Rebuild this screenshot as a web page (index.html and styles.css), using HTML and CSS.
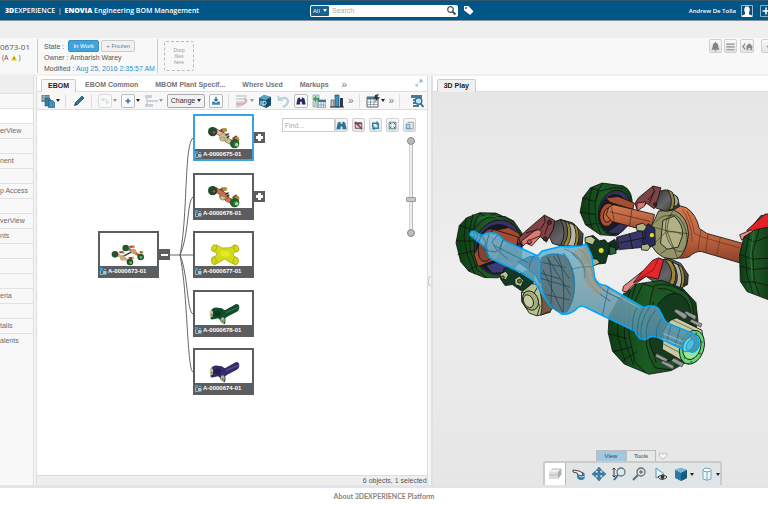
FILE: index.html
```html
<!DOCTYPE html>
<html lang="en">
<head>
<meta charset="utf-8">
<title>ENOVIA Engineering BOM Management</title>
<link rel="stylesheet" href="styles.css">
</head>
<body>
<svg class="defs" aria-hidden="true">
  <symbol id="binoc" viewBox="0 0 14 14"><path d="M3 4 5 3h1v2h2V3h1l2 1 1.500 7H8V8H6v3H1.500z"/></symbol>
  <symbol id="part" viewBox="0 0 7 7"><path d="M0 0h3v3H0z" fill="#3f9cc9"/><path d="M.5 3v3.500H3M4 1.500h2" fill="none" stroke="#a9cfe0" stroke-width=".8"/><path d="M3 3h3.500v3.500H3z" fill="#9ecbe2"/></symbol>
  <symbol id="assembly" viewBox="0 0 171 97">
    <path d="M44 62 68 70 92 86M76 44 100 54 122 68M68 70 98 54" fill="none" stroke="#33334f" stroke-width="4"/>
    <path d="m50 62 40 24" stroke="#d2b68e" stroke-width="8"/><path d="m80 43 42 26" stroke="#cf6245" stroke-width="8"/>
    <circle cx="68" cy="74" r="8" fill="#c7ac7d"/><circle cx="101" cy="54" r="8" fill="#c9a36d"/>
    <g fill="#1d5a27"><circle cx="77" cy="44" r="10"/><circle cx="122" cy="71" r="10"/><circle cx="45" cy="63" r="10"/><circle cx="90" cy="86" r="10"/></g>
    <path d="M88 40h14M58 57h13M119 57h8M86 74h12" stroke="#a83d32" stroke-width="6"/><path d="M98 40h6M68 58h5M125 57h5M96 74h5" stroke="#b6a52b" stroke-width="7"/>
    <circle cx="123" cy="72" r="4" fill="#6cb17a"/><circle cx="92" cy="88" r="4" fill="#6cb17a"/><circle cx="79" cy="45" r="4" fill="#6a3045"/><circle cx="47" cy="64" r="4" fill="#6a3045"/>
  </symbol>
  <symbol id="axle" viewBox="0 0 171 97">
    <path d="m61 43 24 13 12 16 22 11" fill="none" stroke="#604436" stroke-width="15"/>
    <path d="m61 43 24 13 12 16 22 11" fill="none" stroke="currentColor" stroke-width="12"/>
    <ellipse cx="87" cy="63" rx="14" ry="11" fill="currentColor" stroke="#675137"/>
    <ellipse cx="83" cy="68" rx="8" ry="6" fill="#c9c18f" stroke="#4f4b2d"/>
    <path d="m72 43 10-7 9 4-6 9zM111 66l12-9 7 7-12 8z" fill="#8e3935"/>
    <ellipse cx="89" cy="41" rx="8" ry="6" fill="#a7942f"/><ellipse cx="126" cy="69" rx="7" ry="8" fill="#a7942f"/>
    <circle cx="53" cy="46" r="14" fill="#1b4f22"/><circle cx="57" cy="48" r="7" fill="#392b62"/><circle cx="57" cy="48" r="4" fill="#bd4a30"/>
    <circle cx="119" cy="82" r="14" fill="#205e2a"/><circle cx="123" cy="84" r="8" fill="#397f43"/><circle cx="125" cy="85" r="5" fill="#a2dda0"/>
    <path d="m91 57 10-5m-6 13 8-7" stroke="#1d3b1f" stroke-width="4"/>
  </symbol>
  <symbol id="yoke" viewBox="0 0 171 97">
    <path d="m87 55 36-20q10 0 10 10t-9 14L91 76z" fill="currentColor"/>
    <path d="M46 57q8-15 23-11 13 0 19 7 12 6 13 14l-10 11q2 11-2 18l-11-6q-3-10-9-12-12 4-22 3z" fill="currentColor"/>
    <path d="m93 61 38-17" stroke="#fff" stroke-opacity=".18" stroke-width="4"/>
    <path d="M58 59q13-10 21 2l-6 13-17-5z" fill="#000" fill-opacity=".28"/>
    <ellipse cx="49" cy="64" rx="5" ry="10" fill="#c5c8a2"/><ellipse cx="83" cy="84" rx="6" ry="9" fill="#aeb78c"/><circle cx="50" cy="67" r="3" fill="#6d785a"/><circle cx="83" cy="87" r="3" fill="#637152"/>
  </symbol>
</svg>

<header class="topbar">
  <h1 class="brand"><b>3D</b>EXPERIENCE <span class="bar">|</span> <b>ENOVIA</b> Engineering BOM Management</h1>
  <form class="search">
    <button type="button" class="scope">All <i class="caret"></i></button>
    <input type="text" aria-label="Search" placeholder="Search">
    <button type="button" class="plain" aria-label="Go"><svg width="11" height="11" viewBox="0 0 11 11" fill="none" stroke="#4b4b4b"><circle cx="4.500" cy="4.500" r="2.800" stroke-width="1.200"/><path d="m6.500 6.500 3 3" stroke-width="1.800"/></svg></button>
  </form>
  <div class="account">
    <svg class="tag" width="11" height="11" viewBox="0 0 11 11"><path d="M1 1h4.500l5 5.500L7 10 1 5.200z" fill="#fff"/><circle cx="3" cy="3" r=".9" fill="#005686"/></svg>
    <a href="#">Andrew De Tolla</a>
    <svg width="12" height="12" viewBox="0 0 12 12"><path d="M.5.500h11v11H.5z" fill="#17496c" stroke="#9cb9cd"/><path d="M1 12v-1.500l3-1.300V7.500Q3 6 3.300 3.500 4 1.200 6 1.200t2.700 2.300Q9 6 8 7.500v1.700l3 1.300V12z" fill="#fff"/></svg>
    <button type="button" class="plain add" aria-label="Add"><svg width="12" height="12" viewBox="0 0 12 12" fill="none"><path d="M.5.500h11v11H.5z" stroke="#8fb2c9"/><path d="M6 2.500v7M2.500 6h7" stroke="#fff" stroke-width="1.500"/></svg></button>
  </div>
</header>
<div class="strip"></div>

<section class="object">
  <div class="ident"><h2>0673-01</h2><p>(A <svg width="6" height="6" viewBox="0 0 6 6"><path d="M3 .3 5.800 5.500H.2z" fill="#efbd0c"/><path d="M3 2v2" stroke="#765e0a" stroke-width=".7"/></svg> )</p></div>
  <div class="facts">
    <div class="state">State : <button type="button" class="on">In Work</button><button type="button">+ Frozen</button></div>
    <div>Owner : Ambarish Warey</div>
    <div>Modified : <a href="#">Aug 25, 2016 2:35:57 AM</a></div>
  </div>
  <div class="drop">Drop<br>files<br>here</div>
  <div class="actions">
    <button type="button" class="box" aria-label="Notifications"><svg viewBox="0 0 14 14" fill="#85857f"><path d="M2.500 10.500Q4 9 4 6.500 4 3.300 7 3q3 .3 3 3.500 0 2.500 1.500 4zM6 11h2v1H6zM6.500 2h1v1.500h-1z"/></svg></button>
    <button type="button" class="box" aria-label="List"><svg viewBox="0 0 14 14" fill="none" stroke="#8b8b8b"><path d="M2.500 4.500h9M2.500 7.500h9M2.500 10.500h9" stroke-width="1.300"/></svg></button>
    <button type="button" class="box home" aria-label="Home"><svg viewBox="0 0 14 14"><path d="M4.500 4 2 7l2.500 3" fill="none" stroke="#898989" stroke-width="1.300"/><path d="M5 7.200 9 3.500l4 3.700h-1V11h-2V8.500H8V11H6V7.200z" fill="#898989"/></svg></button>
    <button type="button" class="box back" aria-label="Back"><svg viewBox="0 0 14 14"><path d="M8 4 5 7l3 3z" fill="#8a8a8a"/></svg></button>
  </div>
</section>

<main class="work">
  <nav class="side">
    <ul>
      <li class="head"></li><li></li><li class="current"></li>
      <li><a href="#">erView</a></li><li></li>
      <li><a href="#">nent</a></li><li></li>
      <li><a href="#">p Access</a></li><li></li>
      <li><a href="#">verView</a></li><li><a href="#">nts</a></li><li></li><li></li><li></li>
      <li><a href="#">eria</a></li><li></li><li><a href="#">tails</a></li><li><a href="#">alents</a></li>
    </ul>
  </nav>

  <section class="bom">
    <nav class="tabs">
      <a href="#" class="active">EBOM</a><a href="#">EBOM Common</a><a href="#">MBOM Plant Specif...</a><a href="#">Where Used</a><a href="#">Markups</a><a href="#" class="more">»</a>
      <button type="button" class="plain expand" aria-label="Expand"><svg width="8" height="8" viewBox="0 0 8 8" fill="#8fb5cb"><path d="M4 .5h3.500V4L6.300 2.800 5 4 4 3l1.300-1.300z"/><path d="M3.300 7.500H.5V4.700l.9.900L2.500 4.500l1 1-1.100 1.100z" fill="#b5bfc5"/></svg></button>
    </nav>
    <div class="toolbar">
      <div class="group">
        <button type="button" class="tool menu" aria-label="Views"><svg viewBox="0 0 14 14"><path d="M.5 1h8v7h-8z" fill="#667985"/><path d="M1 3h7M1 5h7M3 1v7" stroke="#bdd3df" stroke-width=".7"/><path d="M4 4h4l1.500 1.500V12H4z" fill="#347fa8" stroke="#1e536f" stroke-width=".6"/><path d="M7.500 6.500h4L13.500 8v5.700h-6z" fill="#3c91bb" stroke="#1c516c" stroke-width=".6"/></svg><i class="caret"></i></button>
      </div>
      <div class="group">
        <button type="button" class="tool" aria-label="Edit"><svg viewBox="0 0 14 14"><path d="m3 9 7-7 2 2-7 7z" fill="#28769c" stroke="#294350" stroke-width=".7"/><path d="m3 9 2 2-3 1z" fill="#303030"/></svg></button>
      </div>
      <div class="group">
        <button type="button" class="tool menu off" aria-label="Insert" disabled><svg class="frame" viewBox="0 0 14 14"><path d="M3 4h3v3H3zM8 7h3v3H8z" fill="#9fc1d8"/><path d="M6 5h3v2" fill="none" stroke="#aaa"/></svg><i class="caret"></i></button>
        <button type="button" class="tool menu" aria-label="Add"><svg class="frame" viewBox="0 0 14 14"><path d="M7 4v6M4 7h6" stroke="#3970b5" stroke-width="1.800"/></svg><i class="caret"></i></button>
        <button type="button" class="tool menu off" aria-label="Structure" disabled><svg viewBox="0 0 14 14"><path d="M1 1h7v3H1zM1 10h8v3H1z" fill="#9da5aa"/><path d="M5 6h9v2H5z" fill="#7fb0cb"/><path d="M3 4v7M3 7h3" stroke="#777"/></svg><i class="caret"></i></button>
        <button type="button" class="change">Change <i class="caret"></i></button>
        <button type="button" class="tool" aria-label="Download"><svg class="frame" viewBox="0 0 14 14"><path d="M7 2v5M5 5l2 2 2-2" stroke="#30779f" stroke-width="1.500" fill="none"/><path d="M2.500 7.500H5L6 9h2l1-1.500h2.500v4h-9z" fill="#3b84aa"/></svg></button>
      </div>
      <div class="group">
        <button type="button" class="tool menu off" aria-label="Markup" disabled><svg viewBox="0 0 14 14"><path d="M1 2h11M1 5h11M1 8h8" stroke="#8c9eab" stroke-width="1.500"/><path d="m1 13 6-2 5-5" stroke="#6fa6c7" stroke-width="2" fill="none"/><path d="M1 10h7q4-1 3-4L9 4" stroke="#dc504b" stroke-width="1.800" fill="none"/></svg><i class="caret"></i></button>
        <button type="button" class="tool" aria-label="3D"><svg viewBox="0 0 14 14"><path d="m1 4 5-3 7 2v8l-5 3-7-3z" fill="#226b91"/><path d="m1 4 5-3 7 2-5 3z" fill="#5aa5c5"/><path d="m8 6 5-3v8l-5 3z" fill="#184a68"/><path d="M3 7v4M5 7v5M5 7.500q4-.5 3 2t-3 1" stroke="#d5edf5" stroke-width="1" fill="none"/></svg></button>
        <button type="button" class="tool off" aria-label="Undo" disabled><svg viewBox="0 0 14 14"><path d="M4 5q7-3 8 2 0 4-5 6" stroke="#75a7c3" stroke-width="2.300" fill="none"/><path d="M1.500 1v6h6z" fill="#75a7c3"/></svg></button>
        <button type="button" class="tool" aria-label="Find"><svg class="frame navy"><use href="#binoc"/></svg></button>
        <button type="button" class="tool" aria-label="Export"><svg viewBox="0 0 14 14"><path d="M1 1h6v12H1z" fill="#d8dfdf" stroke="#7a8a90" stroke-width=".6"/><path d="m1 5 3-3v2h3v2H4v2zM2 9h3M2 11h3" fill="#3ca45b" stroke="#3ca45b" stroke-width=".5"/><path d="M6 6h8v8H6z" fill="#e5edf1" stroke="#50636e" stroke-width=".7"/><path d="M6 6h8v2H6z" fill="#397898"/><path d="M9 8v6M11.500 8v6M6 11h8" stroke="#708b98" stroke-width=".6"/></svg></button>
        <button type="button" class="tool" aria-label="Chart"><svg viewBox="0 0 14 14"><path d="M1 6h3v7H1z" fill="#bdc1c3" stroke="#4c5358" stroke-width=".7"/><path d="M5 1h4v12H5z" fill="#3f90b5" stroke="#234a60" stroke-width=".7"/><path d="M10 4h3v9h-3z" fill="#333c44"/><path d="M0 13h14" stroke="#333"/></svg></button>
        <button type="button" class="plain more">»</button>
      </div>
      <div class="group">
        <button type="button" class="tool menu" aria-label="Table"><svg viewBox="0 0 14 14"><path d="M1 3h11v10H1z" fill="#fff" stroke="#58656d"/><path d="M1 3h11v2.500H1z" fill="#347ca1"/><path d="M4.500 5v8M8 5v8M1 8h11M1 10.500h11" stroke="#78858c" stroke-width=".7"/><path d="m9 1 4-1-2 3h3L9 8l1-3H8z" fill="#30373b"/></svg><i class="caret"></i></button>
        <button type="button" class="plain more">»</button>
      </div>
      <div class="group last">
        <button type="button" class="tool" aria-label="Filter"><svg viewBox="0 0 14 14"><path d="M1 1h11v3H1zM3 5h4v2H3zM3 8h4v2H3zM3 11h6v2H3z" fill="#4c7c94"/><circle cx="8.500" cy="7" r="3.300" fill="#c5e2ef" stroke="#2b7399" stroke-width="1.400"/><path d="m10.500 9.500 3 3.500" stroke="#22668a" stroke-width="1.800"/></svg></button>
      </div>
    </div>

    <div class="canvas">
      <svg class="edges" width="230" height="290" fill="none" stroke="#666"><path d="M131 145h26M144 145C152 105 148 35 157 28M144 145C153 125 151 91 157 87M144 145C152 164 151 202 157 204M144 145C152 185 151 260 157 262"/></svg>
      <article class="node root"><svg class="thumb"><use href="#assembly"/></svg><h3><svg width="7" height="7"><use href="#part"/></svg>A-0000673-01</h3><button type="button" aria-label="Collapse" class="minus"></button></article>
      <article class="node n1 selected"><svg class="thumb beige"><use href="#axle"/></svg><h3><svg width="7" height="7"><use href="#part"/></svg>A-0000675-01</h3><button type="button" aria-label="Expand" class="plus"></button></article>
      <article class="node n2"><svg class="thumb rust"><use href="#axle"/></svg><h3><svg width="7" height="7"><use href="#part"/></svg>A-0000676-01</h3><button type="button" aria-label="Expand" class="plus"></button></article>
      <article class="node n3"><svg class="thumb" viewBox="0 0 171 97"><g fill="#d4da16" stroke="#9ca209" stroke-width="2"><path d="m64 34 17 10 24-1 14-9q13 6 9 19l-13 7 1 8 13 7q4 12-8 19l-19-8-13-9-13 8-15 8q-15-7-10-20l14-7V59l-14-7q-2-12 13-18z"/><ellipse cx="57" cy="44" rx="7" ry="10" transform="rotate(24 57 44)"/><ellipse cx="124" cy="45" rx="7" ry="10" transform="rotate(-24 124 45)"/><ellipse cx="57" cy="83" rx="7" ry="11"/><ellipse cx="122" cy="83" rx="8" ry="11"/></g><path d="m77 53 24 0 4 12-11 7-17-5z" fill="#e3e827"/></svg><h3><svg width="7" height="7"><use href="#part"/></svg>A-0000677-01</h3></article>
      <article class="node n4"><svg class="thumb green"><use href="#yoke"/></svg><h3><svg width="7" height="7"><use href="#part"/></svg>A-0000678-01</h3></article>
      <article class="node n5"><svg class="thumb violet"><use href="#yoke"/></svg><h3><svg width="7" height="7"><use href="#part"/></svg>A-0000674-01</h3></article>

      <div class="finder">
        <input type="text" aria-label="Find" placeholder="Find...">
        <button type="button" class="box" aria-label="Find"><svg class="teal"><use href="#binoc"/></svg></button>
        <button type="button" class="box" aria-label="Clear"><svg viewBox="0 0 14 14"><path d="M3.500 4h7v6h-7z" fill="#cbd4d8" stroke="#50595d"/><path d="m3 3 8 8M3 5h7" stroke="#ae2b35" stroke-width="1.500"/></svg></button>
        <button type="button" class="box" aria-label="Reorient"><svg viewBox="0 0 14 14"><path d="M4 9V4.500h5M10 5v5H5" fill="none" stroke="#397da3" stroke-width="1.700"/><path d="m8 2 3 2.500L8 7zM6 7.500v5L3 10z" fill="#397da3"/></svg></button>
        <button type="button" class="box" aria-label="Fit"><svg viewBox="0 0 14 14"><path d="M3.500 3.500h7v7h-7z" fill="#d9e7ee" stroke="#527b90"/><path d="m4 4 6 6m0-6-6 6" stroke="#2e6f92"/><circle cx="7" cy="7" r="1.500" fill="#fff"/></svg></button>
        <button type="button" class="box" aria-label="Overview"><svg viewBox="0 0 14 14"><path d="M5 3.500h6v7H4V7" fill="#eef2f4" stroke="#8b989e"/><path d="M3.500 5.500h4v5h-4z" fill="#b8d6e5" stroke="#5c93b0"/></svg></button>
      </div>
      <div class="zoomer"><i></i><input type="range" aria-label="Zoom" min="0" max="100" value="34"><i></i></div>
    </div>
    <div class="status">6 objects, 1 selected</div>
  </section>

  <div class="splitter"><i></i></div>

  <section class="viewer">
    <nav class="tabs"><a href="#" class="active">3D Play</a></nav>
    <div class="stage">
      <svg class="model" viewBox="433 92 335 393" preserveAspectRatio="xMinYMin slice">
        <defs>
          <linearGradient id="gGreen" x1="0" x2="1"><stop stop-color="#0c3c13"/><stop offset=".45" stop-color="#1d5b25"/><stop offset="1" stop-color="#123d18"/></linearGradient>
          <linearGradient id="gRust" x1="0" x2="0" y2="1"><stop stop-color="#d47a50"/><stop offset=".6" stop-color="#b9603d"/><stop offset="1" stop-color="#87402a"/></linearGradient>
          <linearGradient id="gDark" x1="0" x2="1" y2="1"><stop stop-color="#333"/><stop offset=".5" stop-color="#666"/><stop offset="1" stop-color="#252525"/></linearGradient>
          <linearGradient id="gBlue" x1="0" x2="0" y2="1"><stop stop-color="#72bad9"/><stop offset=".5" stop-color="#739fac"/><stop offset="1" stop-color="#4388a4"/></linearGradient>
        </defs>
        <g transform="translate(440 170) scale(.33333)" stroke="#101510" stroke-width="2.500" stroke-linejoin="round">
          <!-- rear left wheel -->
          <path d="M486 39 548 47Q580 60 576 115 570 173 528 197L480 194 436 164 420 126 428 83 451 53Z" fill="url(#gGreen)"/>
          <path d="m456 53-9 36-1 52 12 38M487 40l-15 24-8 38 3 50 14 39M428 83l38 12 10-31M420 126l45 7M436 164l37-4M452 54l28 9 40-10 30 1" fill="none"/>
          <ellipse cx="524" cy="127" rx="49" ry="67" fill="#333052" transform="rotate(11 524 127)"/>
          <ellipse cx="520" cy="130" rx="42" ry="57" fill="#171a2c" transform="rotate(11 520 130)"/>
          <ellipse cx="502" cy="134" rx="23" ry="35" fill="#ab4d31" transform="rotate(10 502 134)"/>
          <ellipse cx="503" cy="135" rx="13" ry="21" fill="#c2633c" transform="rotate(10 503 135)"/>
          <path d="m496 84 38-5 48 20-4 19-67-21z" fill="#a74c31"/>
          <path d="m533 164 27-17 8 15-32 30-36-5z" fill="#34315f"/>
          <!-- rear axle -->
          <path d="m506 111 15-7 55 13 67 16-12 52-116-31-17-20z" fill="url(#gRust)"/>
          <path d="m509 125 121 29M514 111l8 40M575 118l-7 50" fill="none" stroke-width="1.500"/>
          <path d="M661 120q41-23 78-7 30 21 38 62l23 15 116 32-11 58-122-36q-18-2-36 16-28 10-57-4z" fill="url(#gRust)"/>
          <path d="M739 122q20 35 22 67l28 13 121 35M726 118q28 37 30 96M782 178l-9 62M803 192l-7 53M840 202l-10 50" fill="none" stroke="#65311f" stroke-width="2"/>
          <path d="m655 123 45-4q43 20 45 72-6 57-32 74-51 10-78-37l-7-46z" fill="#929468"/>
          <path d="m668 151 34-13q28 26 25 57l-13 36-33 6-20-17z" fill="#b1b184"/>
          <path d="M700 119q-17 23-20 63M745 191l-65-9-43-12M713 265l-33-83M680 182l-45 46M681 185q32-2 46 10M645 157q20-28 57-19M681 237l-20 14" fill="none" stroke="#454b33"/>
          <ellipse cx="708" cy="189" rx="30" ry="57" fill="none" transform="rotate(-15 708 189)" stroke-width="1.500"/>
          <!-- rear suspension -->
          <path d="m652 64 25-5 35 22 6 28q-25 16-45 14l-27-10z" fill="url(#gDark)"/>
          <path d="m682 59 14 7q15 24 3 50l-13 4q17-28-4-61z" fill="#97833d"/><path d="m699 73 10 5q10 15 3 27l-11 5q7-16-2-37z" fill="#a7a7a0"/>
          <path d="m584 100 11-17 43-35 24 5-8 31-12 32-22-16-30 17z" fill="#814247"/>
          <path d="m590 99 27-4-4 13-22 14z" fill="#dc7773"/><path d="m638 49 4 15-15 36M645 63l-22 27" fill="none"/><circle cx="645" cy="103" r="5" fill="#38282c"/>
          <!-- propeller shaft -->
          <path d="m437 219 60 4 27-16 10 30-25 14-67 31-24-7z" fill="#0e2f1e"/>
          <path d="m530 201 81-22 20 6 9 37-14 8-87 8-11-10z" fill="#383567"/><path d="m531 201 6 40M568 190l9 46M605 180l9 51M538 218l85-17" fill="none"/>
          <path d="m609 172 17-11 18 15 1 48-18 8-24-18 13-14z" fill="#28285b"/>
          <path d="m588 165 20-6 11 11-8 13-21-2z" fill="#b1b382"/><path d="m603 225 20-4 7 10-8 10-18-2z" fill="#adb287"/><circle cx="635" cy="195" r="8" fill="#dedc36"/>
          <path d="m436 203 23-7 19 16 16-3 16 18-14 52-26 3-24-5-6-40z" fill="#123724"/>
          <circle cx="483" cy="241" r="9" fill="#dede24"/><path d="m435 202 18-4 13 10-8 16-23-8z" fill="#b7c28c"/><path d="m451 265 20 2 8 11-18 9-15-11z" fill="#a6b17f"/><path d="m507 229 18 3 3 17-19 5z" fill="#23643c"/>
          <!-- rear right wheel -->
          <path d="m934 170 28-34h22l10 12v56l-43 3z" fill="url(#gDark)"/><path d="m920 180 54-48 14-1v44l-65 28z" fill="#e62027"/><path d="m898 194 35-15 9 13-38 18z" fill="#ed8e8b"/>
          <path d="m988 170-43 9-34 21-13 53 2 80 20 31 68 26z" fill="url(#gGreen)"/>
          <path d="m927 188-12 65 5 60 18 57M957 176l-20 70 5 87 16 43M898 253l39 14 50-3M898 288l40 10 50-5M903 335l41 1 44 11M911 200l33 15 43-17" fill="none"/><path d="m940 183-9 66 5 78" stroke="#45754a" fill="none"/>
          <!-- front left wheel -->
          <path d="m119 128 48 1 54 24 27 39-4 77-29 37-42 17-40-1-47-19-24-28-14-57 10-52 22-23z" fill="url(#gGreen)"/>
          <path d="M78 143 72 199l10 55 22 58M99 132 88 181l3 61 19 55 30 26M123 128q-24 23-23 67l5 48 21 54M58 166l40 13 30-28 38-22M49 212l51 1M53 254l51-13M84 302l39-24M118 130l22 11 55-2 27 15" fill="none"/>
          <path d="M110 151q23-17 56-12l36 18" stroke="#377f40" fill="none"/>
          <ellipse cx="174" cy="231" rx="70" ry="82" fill="#353164" transform="rotate(15 174 231)"/>
          <ellipse cx="171" cy="235" rx="61" ry="72" fill="#161724" transform="rotate(15 171 235)"/>
          <path d="m124 211 31-28 51-11 33 19 3 27-51 7-24 44-53 20-12-35z" fill="#a54a30"/>
          <ellipse cx="143" cy="225" rx="27" ry="50" fill="#824331" transform="rotate(14 143 225)"/><path d="m137 286 56-17 38 10-29 28-45 2z" fill="#3d3b73"/><path d="m161 178 74 23-5 28-87-33z" fill="#a34b2f"/>
          <!-- left trailing arm and air spring -->
          <path d="m342 155 19-7 37 10 31 33-3 36-41 7-48-14-14-30z" fill="url(#gDark)"/>
          <path d="m361 148 17 8q13 29-3 72l-13-3q20-40-1-77z" fill="#5d5d5d"/><path d="m380 157 25 8q13 27-3 64l-25-4q20-34 3-68z" fill="#b8b7a9"/><path d="m376 154 9 3q17 37-4 71l-11-3q22-33 6-71zM400 163l10 6q13 29 0 58l-9 3q14-36-1-67z" fill="#9b8630"/>
          <path d="m236 204 18-19 59-50 31 16-5 27-20 38-19-17-6-18-36 23-14 23z" fill="#824247"/>
          <path d="m244 213 47-37 13 8-3 15-26 28-17-8-10 9z" fill="#df7773"/><path d="m312 136 3 19-14 23M329 148l-15 45M257 188l37-9M271 209l30-12" fill="none"/><circle cx="268" cy="215" r="6" fill="#c95c5b"/><circle cx="328" cy="157" r="6" fill="#4d2b31"/><circle cx="315" cy="206" r="6" fill="#4d2b31"/>
          <!-- input yoke and carrier -->
          <path d="m191 296 18-5 29 19 30-12 16 17-9 43-31 4-27-19-22 3-13-19z" fill="#123925"/><path d="m180 312 17-9 8 11-7 15-16-3zM224 327l14-9 12 13-7 18-18-6z" fill="#b6c293"/><circle cx="238" cy="333" r="6" fill="#577247"/><circle cx="188" cy="322" r="5" fill="#677c50"/>
          <path d="m244 366 32-26 22 6 20 35 13 45-40 11-23-8-23-34z" fill="#b9c292"/><path d="m294 345 25 5 26 56-16 18-27 11q10-41-8-90z" fill="#79573e"/><path d="m244 366 34 10 22 32-9 28M252 404l26-28 17-30M259 380l-12 17M260 416l28-6" fill="none"/><ellipse cx="271" cy="391" rx="23" ry="30" fill="#a4ae7c" transform="rotate(-25 271 391)"/><ellipse cx="265" cy="393" rx="14" ry="20" fill="#c6cba0" transform="rotate(-25 265 393)"/>
          <!-- front right suspension -->
          <path d="m619 319 26-45 41-10 36 16 22 34-2 29-27 15-59-12z" fill="url(#gDark)"/>
          <path d="m673 266 20 7q25 34 5 76l-14-5q26-37-11-78z" fill="#9c8735"/><path d="m696 275 20 10q18 34 3 68l-17-2q22-32-6-76z" fill="#b0b0a7"/><path d="m713 283 12 7q15 30 3 61l-9 5q13-35-6-73z" fill="#9c8735"/>
          <path d="m550 348 56-44 4 20-37 26-14 16-12-4z" fill="#e48682"/><path d="m603 308 35-38 18-7 14 6-16 58-35-8-39 19z" fill="#e5262b"/><path d="m656 264-18 36-41 25" fill="none" stroke="#841519"/>
          <!-- front right wheel -->
          <path d="m587 342 77-12 65 26 38 41 6 55-33 123-47 26-67 11-74-31-35-38-13-56 3-50 31-55 32-25z" fill="url(#gGreen)"/>
          <path d="m552 366-20 64 1 70 22 74M571 359l-19 57 1 90 26 77M588 342q-28 71-22 148l18 86 34 33M507 437l55 22M504 490l57 15M520 544l53-13M546 573l44-29M531 383l47 25 29-66M604 339l62 21 65-1" fill="none"/>
          <path d="M643 345q59-10 101 32 28 42 5 112l-24 77-34 32-46-5q-42-63-21-151 4-62 19-97z" fill="#1c5624"/><path d="M653 355q55-3 82 46 20 43-15 130l-27 46M640 394q-31 74 8 184" fill="none"/>
          <ellipse cx="690" cy="471" rx="61" ry="103" fill="#143b1e" transform="rotate(12 690 471)"/>
          <g fill="#99999b" stroke="#333" stroke-width="2"><path d="m702 424 5-8 34 17-3 11-7 2zM732 430l5-8 31 15-3 12zM748 454l6-7 31 14-4 10zM645 559l4-9 33 17-4 10zM662 578l6-8 34 17-5 10zM693 572l7-9 30 16-5 11z"/></g>
          <path d="m671 482 18-31 20-8 76 37 6 46-21 46-26 10-78-45z" fill="#c9cba1"/><path d="m683 458 78 37M674 475l77 42M669 498l76 35M668 520l72 39M697 449l75 36" stroke="#6c7457" stroke-width="3"/>
          <ellipse cx="755" cy="531" rx="36" ry="52" fill="#68d278" transform="rotate(18 755 531)"/><ellipse cx="755" cy="530" rx="26" ry="39" fill="#99e497" transform="rotate(18 755 530)"/><g fill="#287939" stroke="none"><circle cx="768" cy="490" r="3"/><circle cx="785" cy="516" r="3"/><circle cx="779" cy="550" r="3"/><circle cx="753" cy="575" r="3"/><circle cx="733" cy="562" r="3"/></g>
          <!-- selected front axle -->
          <g stroke="#008dda" fill="url(#gBlue)">
            <path d="M90 195q-1-11 12-12l23 13q22-14 49-3l17 18 101 46 14-14 55-14 61-1 16-6q10 16 17 37l8 62q8 23 33 25l114 66 19-5q24-1 31 17l11 22q6 13 21 17l65 26q20 13 20 34-4 20-21 23l-37-13-50-24q-22-13-36-10l-18 9q-24 0-30-26l-95-45-52-25q-20-10-31 6-20 17-43 13l-34-24-30-44-15-28-44-29-85-39q-15-8-17-33z" fill-opacity=".87" stroke="#00a7fa" stroke-width="5"/>
            <path d="m234 275 36-16 24 2 10 20-4 60-14-27z" fill="#548aa6" fill-opacity=".85"/>
            <path d="M303 263q32-20 69-7 32 31 32 88-2 51-23 81-27 7-49-18-30-40-29-91z" fill="#536a70" fill-opacity=".78"/>
            <path d="m320 259 71 115M308 298l59 128M325 267q14 40 7 134M352 252q25 52 17 174M303 325l88 26M316 373l73 16M340 258l48 68M307 277l70 15M302 309l57 17" fill="none" stroke="#193b4d" stroke-width="2"/>
            <path d="M369 250q28 26 32 82 6 45-15 80M394 247q47 41 48 77 9 33 69 69M415 237q32 10 46 92 24 38 86 58" fill="none" stroke="#3c7589" stroke-width="3"/>
            <path d="M147 193q-14 34-2 66M174 193l-18 22 17 30 15-34M125 196l12 20-5 24 37 6M100 186q6 12 0 18M110 187q5 13-2 22M120 194q4 9-4 22M188 209l-9 38 24 19M284 255q-18 21-16 39M162 226l102 51M505 350l-18 84M592 410q-22 34-12 88M610 413q-25 42-16 99M631 405q-38 54-26 105M647 420q-34 32-28 88M664 445q-19 27-15 57M692 465l-12 49M719 475l-14 49" fill="none" stroke="#155f85" stroke-width="2"/>
            <ellipse cx="743" cy="523" rx="12" ry="23" fill="#71d7d9" transform="rotate(28 743 523)"/><ellipse cx="750" cy="524" rx="10" ry="19" fill="#54bddd" transform="rotate(28 750 524)"/><path d="m669 490 59 24M666 505l57 22M516 368l82 45" stroke="#a7d2d5" stroke-width="2" fill="none"/>
            <path d="m398 239 40-10q17 30 16 50l9 50q9 18 25 27l-12 20q-51-30-49-78-8-27-29-59z" fill="#9d9e8b" fill-opacity=".75" stroke="none"/><path d="M390 300q30-14 67-9M371 236q68 22 63 89" fill="none" stroke="#397287" stroke-width="2"/>
          </g>
        </g>
      </svg>
      <div class="dock">
        <div class="docktabs"><button type="button" class="on">View</button><button type="button">Tools</button><svg width="10" height="8" viewBox="0 0 10 8"><path d="M1 2 3 1l2 1.500L7 1l2 1-.5 2L5 7 1.500 4z" fill="#fff" stroke="#aaa" stroke-width=".8"/></svg></div>
        <div class="docktools">
          <button type="button" class="first" aria-label="Box"><svg viewBox="0 0 14 14"><path d="m1 5 3-3h9v6l-3 4H1z" fill="#aaa"/><path d="m1 5 3-3h9l-3 3z" fill="#eee"/><path d="M1 5h9v7H1z" fill="#ddd"/><path d="M1 8h9M4 2h9v6" fill="none" stroke="#bbb"/></svg></button>
          <button type="button" aria-label="Turn"><svg viewBox="0 0 14 14"><circle cx="9" cy="9" r="4" fill="#3284ac"/><path d="m1 3 6 1 4 2-1 3-4-1-1-2-4-1z" fill="#eee" stroke="#444"/><path d="m7 9 3 1 3-1" stroke="#bddae7" fill="none"/></svg></button>
          <button type="button" aria-label="Pan"><svg viewBox="0 0 14 14"><path d="m7 0 3 3.500H8V6h2.500V4L14 7l-3.500 3V8H8v2.500h2L7 14l-3-3.500h2V8H3.500v2L0 7l3.500-3v2H6V3.500H4z" fill="#3b86ad" stroke="#225b79" stroke-width=".5"/></svg></button>
          <button type="button" aria-label="Zoom"><svg viewBox="0 0 14 14"><path d="M2 1v9M.5 2.500 2 1l1.500 1.500M.5 8.500 2 10l1.500-1.500" stroke="#333" fill="none"/><circle cx="9" cy="5" r="4" fill="#d9eaf1" stroke="#607884" stroke-width="1.300"/><path d="m6 8-4 5" stroke="#276d91" stroke-width="2"/></svg></button>
          <button type="button" class="end" aria-label="Fit"><svg viewBox="0 0 14 14"><circle cx="9" cy="5" r="4" fill="#dee5e8" stroke="#626f75" stroke-width="1.300"/><path d="M9 3v4M7 5h4" stroke="#555"/><path d="m6 8-5 5" stroke="#52758a" stroke-width="2.200"/></svg></button>
          <button type="button" aria-label="Look at"><svg viewBox="0 0 14 14"><path d="m2 1 8 6-8 4z" fill="#e9f7fc" stroke="#4a9abb"/><path d="M4 10q5-4 9 0-5 5-9 0z" fill="#fff" stroke="#333"/><circle cx="8.500" cy="10" r="2" fill="#333"/></svg></button>
          <button type="button" class="menu" aria-label="Render"><svg viewBox="0 0 14 14"><path d="m1 3 6-2 6 2v8l-6 3-6-3z" fill="#287ba5"/><path d="m1 3 6-2 6 2-6 3z" fill="#78bbd4"/><path d="m7 6 6-3v8l-6 3z" fill="#1b597c"/></svg><i class="caret"></i></button>
          <button type="button" class="menu" aria-label="Section"><svg viewBox="0 0 14 14"><path d="M3 3v9q4 2.500 8 0V3" fill="#edf6fa" stroke="#76a8bf"/><ellipse cx="7" cy="3" rx="4" ry="1.800" fill="#fff" stroke="#76a8bf"/><path d="M7 5v8" stroke="#76a8bf"/></svg><i class="caret"></i></button>
        </div>
      </div>
    </div>
  </section>
</main>
<footer class="foot"><a href="#">About 3DEXPERIENCE Platform</a></footer>
</body>
</html>
```
FILE: styles.css
```css
* { box-sizing: border-box; }
html, body { margin: 0; }
body { display: flex; flex-direction: column; height: 100vh; overflow: hidden; background: #fff; color: #555; font: 7px/10px "Liberation Sans", Arial, sans-serif; }
h1, h2, h3, p, ul { margin: 0; padding: 0; font: inherit; list-style: none; }
a { color: inherit; text-decoration: none; }
svg { display: block; flex: none; }
button, input { margin: 0; padding: 0; font: inherit; color: inherit; border: 0; background: none; }
.defs { position: absolute; width: 0; height: 0; }
.caret { display: inline-block; border: 2px solid transparent; border-top: 3px solid currentColor; border-bottom: 0; }
.plain { display: flex; align-items: center; }

.topbar { display: grid; grid-template-columns: 1fr 148px 1fr; align-items: center; flex: none; height: 21px; border-top: 1px solid #34566b; border-bottom: 1px solid #84949d; background: #005686; color: #fff; font-family: "Open Sans", sans-serif; }
.brand { padding-left: 5px; font-weight: 600; white-space: nowrap; }
.brand .bar { margin: 0 1px; color: #b9cedb; }
.search { display: flex; align-items: center; height: 12px; padding: 1px; border-radius: 2px; background: #fff; }
.search input { flex: 1; min-width: 0; margin-left: 3px; font-family: "Liberation Sans", sans-serif; outline: 0; }
input::placeholder { color: #aaa; opacity: 1; }
.scope { display: flex; align-items: center; justify-content: center; gap: 3px; width: 18px; height: 10px; border-radius: 1px; background: #17608c; color: #fff; font-size: 6px; }
.account { display: flex; align-items: center; gap: 5px; margin-right: -4px; font-size: 6px; font-weight: 600; }
.tag { margin: 0 auto 0 5px; }
.add { margin-left: 2px; }
.strip { flex: none; height: 17px; background: #efefef; }

.object { display: flex; flex: none; height: 38px; border-bottom: 2px solid #f0f0f0; background: #f8f8f8; }
.ident { width: 38px; margin: 1px 0; border-right: 1px solid #ccc; color: #555; }
.ident h2 { margin-top: 2px; font: 8px/12px "Open Sans", sans-serif; }
.ident p { display: flex; align-items: center; gap: 2px; padding-left: 2px; font-family: "Open Sans", sans-serif; }
.facts { width: 120px; margin: 1px 0; padding: 1px 0 0 6px; border-right: 1px solid #ccc; line-height: 11px; white-space: nowrap; }
.facts a { color: #368ec4; }
.state { display: flex; gap: 2px; align-items: center; }
.state button { height: 12px; padding: 0 4px; border: 1px solid #ccc; border-radius: 2px; background: #f1f1f1; font-size: 6px; line-height: 10px; color: #777; }
.state button:first-of-type { margin-left: 2px; }
.state .on { width: 31px; border-color: #368ec4; background: #42a2da; color: #fff; }
.drop { align-self: center; width: 30px; height: 30px; margin-left: 6px; padding-top: 5px; border: 1px dashed #bbb; border-radius: 2px; color: #999; font-size: 5px; line-height: 6px; text-align: center; }
.actions { display: flex; gap: 2px; margin: 1px -7px 0 auto; }
.box { display: flex; align-items: center; justify-content: center; width: 13px; height: 14px; border: 1px solid #d0d0d0; border-radius: 2px; background: linear-gradient(#f9f9f9, #e4e4e4); }
.box svg { width: 13px; height: 13px; }
.actions .home { width: 14px; margin-left: 1px; }
.actions .back { width: 14px; margin-left: 5px; }

.work { display: flex; flex: 1; min-height: 0; background: #f5f5f5; border-bottom: 3px solid #e1e4eb; }
.side { flex: none; width: 34px; overflow: hidden; border-right: 1px solid #ddd; background: #f8f8f8; }
.side li { height: 15px; border-bottom: 1px solid #e2e2e2; line-height: 14px; white-space: nowrap; color: #6b6b6b; }
.side li.head { height: 18px; background: #eee; }
.side li.current { background: #fff; }
.side li:last-child { border: 0; }
.bom { display: flex; flex-direction: column; flex: none; width: 51%; max-width: 800px; margin-left: 2px; border: 0 solid #ddd; border-width: 0 1px; }
.tabs { display: flex; align-items: flex-end; flex: none; gap: 17px; height: 16px; padding: 0 4px; background: #fff; border-bottom: 1px solid #ddd; color: #747474; font-weight: bold; line-height: 12px; white-space: nowrap; }
.tabs .active { height: 13px; margin: 0 -8px -1px 0; padding: 0 6px; border: 1px solid #ccc; border-bottom: 0; border-radius: 2px 2px 0 0; background: #f7f7f7; color: #222; }
.tabs .more { margin-left: -4px; }
.more { color: #777; font-size: 10px; font-weight: normal; }
.expand { align-self: center; margin: 0 0 2px auto; }
.toolbar { display: flex; align-items: center; flex: none; height: 18px; padding-left: 4px; background: #f7f7f7; border-bottom: 1px solid #ddd; }
.group { display: flex; align-items: center; gap: 4px; padding-right: 5px; border-right: 1px solid #ddd; }
.group + .group { padding-left: 6px; }
.toolbar .last { margin-left: auto; padding-right: 3px; border: 0; }
.tool { display: flex; align-items: center; gap: 1px; color: #222; }
.tool svg { width: 14px; height: 14px; }
.tool .frame { border: 1px solid #bbb; border-radius: 2px; background: #f8fafb; }
.off { opacity: .45; }
.navy { fill: #2a2c60; }
.teal { fill: #2d7199; }
.change { display: flex; align-items: center; justify-content: center; gap: 2px; width: 38px; height: 14px; border: 1px solid #aaa; border-radius: 2px; background: #f2f2f2; color: #333; }

.canvas { position: relative; flex: 1; min-height: 0; background: #fff; }
.edges { position: absolute; left: -1px; top: 0; }
.node { position: absolute; left: 156px; width: 61px; height: 47px; border: 2px solid #5b5d60; background: #5b5d60; }
.node.selected { border-color: #39a2df; }
.root { left: 61px; top: 121px; }
.n1 { top: 4px; } .n2 { top: 63px; } .n3 { top: 121px; } .n4 { top: 180px; } .n5 { top: 238px; }
.thumb { width: 57px; height: 33px; background: #fff; }
.beige { color: #dbbd98; } .rust { color: #d4704a; } .green { color: #114d2d; } .violet { color: #332c6c; }
.node h3 { display: flex; align-items: center; gap: 1px; color: #fff; font: bold 6px/10px "Liberation Sans", sans-serif; white-space: nowrap; }
.node button { position: absolute; left: calc(100% + 2px); top: 16px; width: 11px; height: 11px; background: linear-gradient(#fff, #fff) center / 7px 2px no-repeat #5b5d60; }
.node .plus { background: linear-gradient(#fff, #fff) center / 7px 3px no-repeat, linear-gradient(#fff, #fff) center / 3px 7px no-repeat #5b5d60; }
.finder { position: absolute; top: 8px; right: 11px; display: flex; gap: 4px; }
.finder input { width: 53px; height: 14px; margin-right: -4px; padding: 0 2px; border: 1px solid #ccc; }
.zoomer { position: absolute; top: 27px; right: 11px; display: flex; flex-direction: column; align-items: center; width: 10px; }
.zoomer i { width: 8px; height: 8px; border: 1px solid #888; border-radius: 50%; background: #bbb; }
.zoomer input { appearance: none; writing-mode: vertical-lr; direction: rtl; width: 10px; height: 84px; background: linear-gradient(90deg, #bbb, #eee 1px, #eee 3px, #bbb 3px) center / 4px 100% no-repeat; }
.zoomer input::-webkit-slider-thumb { appearance: none; width: 10px; height: 5px; border: 1px solid #999; border-radius: 1px; background: #c9c9c9; }
.status { flex: none; height: 10px; border-top: 1px solid #ddd; background: #eee; line-height: 10px; text-align: right; }

.splitter { display: flex; align-items: center; flex: none; width: 5px; border-right: 2px solid #dde0e7; }
.splitter i { width: 3px; height: 10px; border: 1px solid #ccc; border-right: 0; border-radius: 3px 0 0 3px; }
.viewer { display: flex; flex-direction: column; flex: 1; min-width: 0; }
.viewer .active { background: #f0f0f0; }
.stage { position: relative; flex: 1; min-height: 0; overflow: hidden; background: linear-gradient(#e6e6e6, #eee 45%, #e6e6e6); }
.model { width: 100%; height: 100%; }
.dock { position: absolute; right: 46px; bottom: 0; color: #444; }
.docktabs { display: flex; align-items: center; height: 11px; padding-left: 53px; font-size: 6px; }
.docktabs button { width: 30px; height: 11px; border: 1px solid #bbb; border-bottom: 0; background: #e5e8e8; line-height: 10px; }
.docktabs .on { background: #9dcae0; }
.docktabs svg { margin-left: 2px; }
.docktools { display: flex; align-items: center; gap: 6px; height: 24px; border: 2px solid #c9cbcc; border-bottom: 0; border-radius: 3px 3px 0 0; background: #e1e5e5; }
.docktools button { display: flex; align-items: center; gap: 2px; }
.docktools svg { width: 14px; height: 14px; }
.docktools .first { height: 22px; padding: 0 3px; background: #fff; border-right: 1px solid #bbb; }
.docktools .menu { color: #222; }
.docktools .end { padding-right: 2px; }

.foot { flex: none; height: 17px; line-height: 16px; text-align: center; color: #8c8279; font-family: Lato, "Open Sans", sans-serif; font-weight: 700; }
```
